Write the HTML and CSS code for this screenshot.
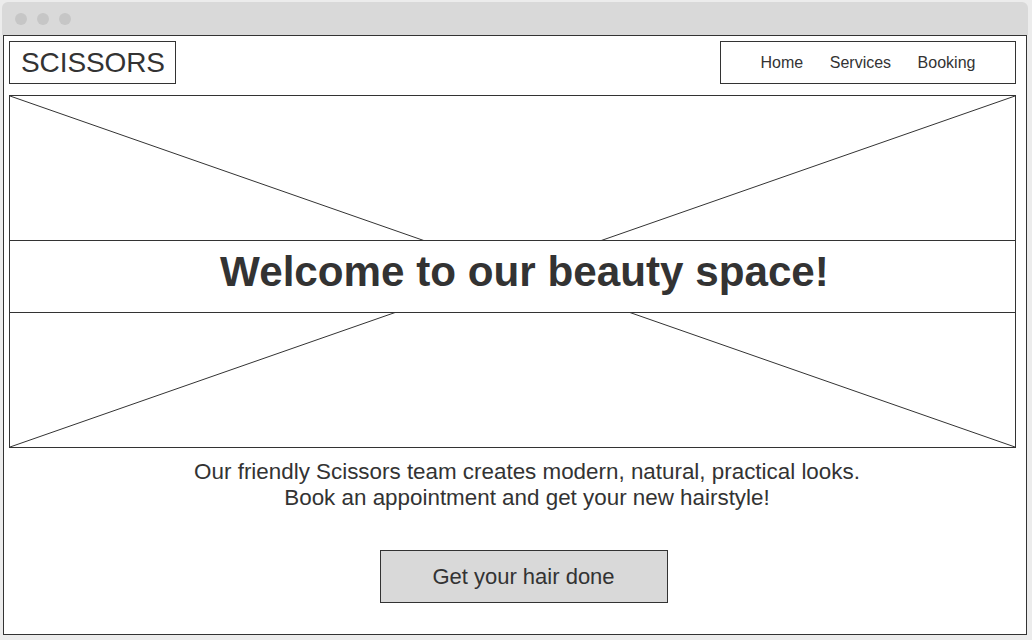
FILE: index.html
```html
<!DOCTYPE html>
<html lang="en">
<head>
<meta charset="utf-8">
<title>Scissors</title>
<link rel="stylesheet" href="styles.css">
</head>
<body>
<div class="window">
  <div class="titlebar">
    <span class="dot"></span><span class="dot"></span><span class="dot"></span>
  </div>
  <div class="content">
    <header class="header">
      <div class="logo">SCISSORS</div>
      <nav class="nav">
        <a href="#">Home</a>
        <a href="#">Services</a>
        <a href="#">Booking</a>
      </nav>
    </header>
    <section class="hero">
      <svg class="hero-x" viewBox="0 0 100 100" preserveAspectRatio="none" aria-hidden="true">
        <line x1="0" y1="0" x2="100" y2="100" vector-effect="non-scaling-stroke"/>
        <line x1="100" y1="0" x2="0" y2="100" vector-effect="non-scaling-stroke"/>
      </svg>
      <div class="band">
        <h1 class="title">Welcome to our beauty space!</h1>
      </div>
    </section>
    <p class="intro">Our friendly Scissors team creates modern, natural, practical looks.<br>Book an appointment and get your new hairstyle!</p>
    <div class="cta-row">
      <button class="cta">Get your hair done</button>
    </div>
  </div>
</div>
</body>
</html>
```
FILE: styles.css
```css
* { box-sizing: border-box; }
html, body { margin: 0; padding: 0; }
body {
  background: #ececec;
  font-family: "Liberation Sans", Arial, sans-serif;
  color: #333;
  height: 640px;
  overflow: hidden;
}
.window {
  margin: 2px 0 0 2px;
  width: 1026px;
}
.titlebar {
  height: 33px;
  background: #d9d9d9;
  border-radius: 6px 6px 0 0;
  display: flex;
  align-items: center;
  gap: 10px;
  padding: 0 0 0 13px;
}
.dot {
  width: 12px;
  height: 12px;
  border-radius: 50%;
  background: #c6c6c6;
}
.content {
  margin: 0 1px;
  height: 600px;
  border: 1px solid #333;
  background: #fff;
  padding: 5px 10px 0 5px;
}
.header {
  display: flex;
  justify-content: space-between;
  height: 43px;
}
.logo {
  border: 1px solid #333;
  padding: 0 10px 0 11px;
  font-size: 28px;
  line-height: 41px;
  letter-spacing: -0.1px;
}
.nav {
  width: 296px;
  border: 1px solid #333;
  display: flex;
  justify-content: center;
  align-items: center;
  gap: 26.5px;
  font-size: 16px;
}
.nav a {
  color: #333;
  text-decoration: none;
}
.hero {
  position: relative;
  margin-top: 11px;
  height: 353px;
  border: 1px solid #333;
  padding-top: 144px;
}
.hero-x {
  position: absolute;
  left: 0;
  top: 0;
  width: 100%;
  height: 100%;
}
.hero-x line {
  stroke: #333;
  stroke-width: 1;
}
.band {
  position: relative;
  height: 73px;
  border-top: 1px solid #333;
  border-bottom: 1px solid #333;
  background: #fff;
  display: flex;
  align-items: center;
  justify-content: center;
  padding: 0 0 10px 24px;
}
.title {
  margin: 0;
  font-size: 42.2px;
  font-weight: bold;
  line-height: 48px;
}
.intro {
  margin: 11px 0 0;
  padding-left: 29px;
  text-align: center;
  font-size: 22.4px;
  line-height: 26px;
}
.cta-row {
  display: flex;
  justify-content: center;
  padding-left: 22px;
  margin-top: 39px;
}
.cta {
  width: 288px;
  height: 53px;
  background: #d9d9d9;
  border: 1px solid #333;
  font-family: "Liberation Sans", Arial, sans-serif;
  font-size: 22px;
  color: #333;
  padding: 0;
}
```
